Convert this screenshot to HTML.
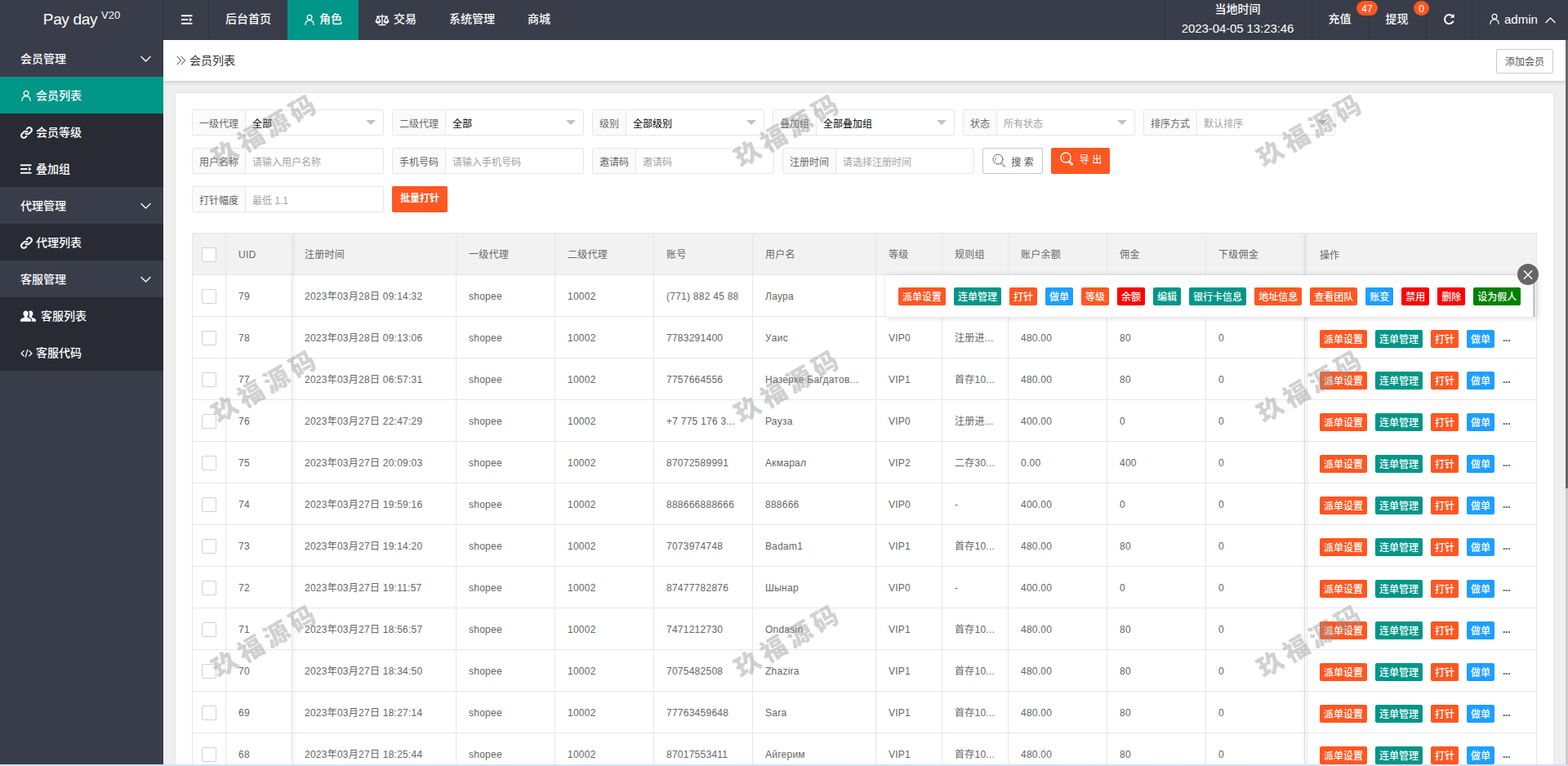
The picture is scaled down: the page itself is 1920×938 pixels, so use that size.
<!DOCTYPE html>
<html lang="zh-CN">
<head>
<meta charset="utf-8">
<title>Pay day</title>
<style>
*{box-sizing:border-box;margin:0;padding:0}
html,body{width:1920px;height:938px;overflow:hidden;background:#efefef}
body{position:relative;font-family:"Liberation Sans","Noto Sans CJK SC",sans-serif;font-size:12px;color:#666;line-height:1}
svg{display:block}
/* ---------- header ---------- */
#hd{position:absolute;left:0;top:0;width:1920px;height:49px;background:#393d49;color:#fff;font-size:14px;font-weight:500}
#hd .it{position:absolute;top:0;height:49px;line-height:47px;text-align:center;white-space:nowrap;color:#fff}
#hd .sep{position:absolute;top:0;width:1px;height:49px;background:rgba(0,0,0,.18)}
#logo{font-weight:normal;position:absolute;left:0;top:0;width:200px;height:49px;line-height:47px;text-align:center;font-size:19px;color:#fff;white-space:nowrap;letter-spacing:-.35px;padding-right:0}
#logo sup{font-size:13px;position:relative;top:-7px;vertical-align:baseline;margin-left:5px;letter-spacing:0}
.bdg{position:absolute;height:18px;line-height:20px;border-radius:9px;background:#ff5722;color:#fff;font-size:12px;text-align:center}
/* ---------- side ---------- */
#side{position:absolute;left:0;top:49px;width:200px;height:889px;background:#393d49;color:#fff;font-size:14px;font-weight:500}
#side .p,#side .c{position:relative;height:45px;line-height:47px;white-space:nowrap}
#side .p{padding-left:25px}
#side .c{padding-left:44px;background:#282b33}
#side .c.on{background:#009688}
#side .c svg{position:absolute;left:25px;top:16px}
#side .p svg{position:absolute;left:172px;top:19px}
/* ---------- title bar ---------- */
#tb{position:absolute;left:200px;top:49px;width:1717px;height:50px;background:#fff;box-shadow:0 1px 5px rgba(0,0,0,.2)}
#tb .tt{position:absolute;left:32px;top:0;line-height:51px;font-size:14px;color:#333}
#tb .add{position:absolute;left:1632px;top:11px;width:70px;height:30px;line-height:30px;border:1px solid #c9c9c9;border-radius:2px;text-align:center;font-size:12px;color:#555;background:#fff}
/* ---------- card ---------- */
#card{position:absolute;left:215px;top:114px;width:1687px;height:840px;background:#fff;box-shadow:0 0 3px rgba(0,0,0,.08)}
.g{position:absolute;height:32px;border:1px solid #e6e6e6;border-radius:2px;background:#fff;white-space:nowrap;overflow:hidden}
.g .l{position:absolute;left:0;top:0;height:30px;line-height:34px;padding:0 8px;background:#fbfbfb;border-right:1px solid #e6e6e6;color:#666;font-size:12px}
.g .v{position:absolute;top:0;height:30px;line-height:34px;font-size:12px;color:#000}
.g .v.ph{color:#a3a3a3}
.g .tri{position:absolute;right:9px;top:12px;width:0;height:0;border:6px solid transparent;border-top-color:#c2c2c2}
.btn{position:absolute;height:32px;line-height:32px;border-radius:2px;text-align:center;font-size:12px;white-space:nowrap}
/* ---------- table ---------- */
#tbl{position:absolute;left:235px;top:285px;width:1647px;height:660px;border:1px solid #e6e6e6;background:#fff;overflow:hidden}
.r{position:absolute;left:0;width:1645px;height:51px;border-bottom:1px solid #e6e6e6;background:#fff}
.r.h{background:#f2f2f2}
.r span{position:absolute;top:0;height:50px;line-height:52px;letter-spacing:.25px;padding-left:15px;border-right:1px solid #e6e6e6;white-space:nowrap;overflow:hidden;color:#666;font-size:12px}
.r i.cb{position:absolute;left:11px;top:17px;width:18px;height:18px;border:1px solid #d2d2d2;border-radius:2px;background:#fff}
.r .op{position:absolute;left:1364px;top:0;width:281px;height:50px;border-left:1px solid #e6e6e6;padding:16px 0 0 15px;white-space:nowrap;font-size:0;background:inherit}
.b{display:inline-block;font-weight:500;height:22px;line-height:25px;padding:0 5px;border-radius:2px;color:#fff;font-size:12px;vertical-align:top;margin-right:10px}
.o{background:#ff5722}.t{background:#009688}.u{background:#1e9fff}.rd{background:#ff0000}.gn{background:#008000}
.op em{font-style:normal;font-size:12px;color:#555;line-height:20px;display:inline-block;vertical-align:top;font-weight:bold;letter-spacing:-.3px}
/* ---------- tips ---------- */
#tip{position:absolute;left:1085px;top:337px;width:796px;height:51px;background:#fff;box-shadow:1px 1px 7px rgba(0,0,0,.16);padding:15px 0 0 15px;white-space:nowrap;font-size:0}
#tipsb{position:absolute;left:1877px;top:345px;width:3px;height:43px;background:#c8c8c8}
#tipc{position:absolute;left:1858px;top:323px;width:26px;height:26px;border-radius:50%;background:#666}
/* ---------- watermark ---------- */
.wm{position:absolute;width:200px;height:40px;line-height:40px;margin:-20px 0 0 -100px;text-align:center;font-size:31px;font-weight:900;color:rgba(150,150,150,.44);transform:rotate(-30deg);letter-spacing:5.5px;padding-left:11px;white-space:nowrap;pointer-events:none;font-family:"Liberation Sans","Noto Sans CJK SC",sans-serif}
/* ---------- scrollbar / bottom ---------- */
#sbt{position:absolute;left:1917px;top:49px;width:3px;height:889px;background:#ccc}
#sbh{position:absolute;left:1917px;top:49px;width:3px;height:549px;background:#666}
#bot{position:absolute;left:0;top:936px;width:1920px;height:2px;background:linear-gradient(90deg,#cde5ee 0,#cde5ee 40%,#d8dcec 100%)}
</style>
</head>
<body>
<div id="tb"><svg width="12" height="12" viewBox="0 0 12 12" fill="none" stroke="#777" stroke-width="1.100" stroke-linecap="round" stroke-linejoin="round" style="position:absolute;left:16px;top:19px"><path d="M1 1.200l4.600 4.800L1 10.800M6 1.200l4.600 4.800L6 10.800"/></svg><div class="tt">会员列表</div><div class="add">添加会员</div></div>
<div id="card"></div>
<div class="g" style="left:235px;top:134px;width:235px"><div class="l" style="width:65px">一级代理</div><div class="v" style="left:73px">全部</div><i class="tri"></i></div>
<div class="g" style="left:480px;top:134px;width:235px"><div class="l" style="width:65px">二级代理</div><div class="v" style="left:73px">全部</div><i class="tri"></i></div>
<div class="g" style="left:725px;top:134px;width:211px"><div class="l" style="width:41px">级别</div><div class="v" style="left:49px">全部级别</div><i class="tri"></i></div>
<div class="g" style="left:946px;top:134px;width:223px"><div class="l" style="width:53px">叠加组</div><div class="v" style="left:61px">全部叠加组</div><i class="tri"></i></div>
<div class="g" style="left:1179px;top:134px;width:211px"><div class="l" style="width:41px">状态</div><div class="v ph" style="left:49px">所有状态</div><i class="tri"></i></div>
<div class="g" style="left:1400px;top:134px;width:235px"><div class="l" style="width:65px">排序方式</div><div class="v ph" style="left:73px">默认排序</div><i class="tri"></i></div>
<div class="g" style="left:235px;top:181px;width:235px"><div class="l" style="width:65px">用户名称</div><div class="v ph" style="left:73px">请输入用户名称</div></div>
<div class="g" style="left:480px;top:181px;width:235px"><div class="l" style="width:65px">手机号码</div><div class="v ph" style="left:73px">请输入手机号码</div></div>
<div class="g" style="left:725px;top:181px;width:223px"><div class="l" style="width:53px">邀请码</div><div class="v ph" style="left:61px">邀请码</div></div>
<div class="g" style="left:958px;top:181px;width:235px"><div class="l" style="width:65px">注册时间</div><div class="v ph" style="left:73px">请选择注册时间</div></div>
<div class="g" style="left:235px;top:228px;width:235px"><div class="l" style="width:65px">打针幅度</div><div class="v ph" style="left:73px">最低 1.1</div></div>
<div class="btn" style="left:1203px;top:181px;width:74px;border:1px solid #c9c9c9;background:#fff;color:#555;line-height:34px;padding-left:24px"><svg width="17" height="17" viewBox="0 0 17 17" fill="none" stroke="#666" stroke-width="1.0" stroke-linecap="round" style="position:absolute;left:11px;top:6px"><circle cx="7" cy="7" r="6"/><path d="M11.800 11.200l3.300 3.300a0.900 0.900 0 0 1-1.300 1.300l-3.300-3.300" stroke-width="0.85"/><path d="M4.300 8.400a3.200 3.200 0 0 1 0.300-3.300" stroke-width="0.800"/></svg>搜 索</div>
<div class="btn" style="left:1287px;top:181px;width:72px;background:#ff5722;color:#fff;line-height:31px;padding-left:25px;height:32px"><svg width="17" height="17" viewBox="0 0 17 17" fill="none" stroke="#fff" stroke-width="1.4" stroke-linecap="round" style="position:absolute;left:11px;top:5px"><circle cx="7" cy="7" r="6"/><path d="M11.800 11.200l3.300 3.300a0.900 0.900 0 0 1-1.300 1.300l-3.300-3.300" stroke-width="1.19"/><path d="M4.300 8.400a3.200 3.200 0 0 1 0.300-3.300" stroke-width="0.800"/></svg>导 出</div>
<div class="btn" style="left:480px;top:228px;width:68px;background:#ff5722;color:#fff;font-weight:bold;line-height:30px">批量打针</div>
<div id="tbl">
<div class="r h" style="top:0px"><span style="left:0;width:41px;padding:0"><i class="cb"></i></span><span style="left:41px;width:81px">UID</span><span style="left:122px;width:201px">注册时间</span><span style="left:323px;width:121px">一级代理</span><span style="left:444px;width:121px">二级代理</span><span style="left:565px;width:121px">账号</span><span style="left:686px;width:151px">用户名</span><span style="left:837px;width:81px">等级</span><span style="left:918px;width:81px">规则组</span><span style="left:999px;width:121px">账户余额</span><span style="left:1120px;width:121px">佣金</span><span style="left:1241px;width:121px">下级佣金</span><div class="op"><em style="line-height:22px;font-weight:normal;color:#666;letter-spacing:0">操作</em></div></div>
<div class="r" style="top:51px"><span style="left:0;width:41px;padding:0"><i class="cb"></i></span><span style="left:41px;width:81px">79</span><span style="left:122px;width:201px">2023年03月28日 09:14:32</span><span style="left:323px;width:121px">shopee</span><span style="left:444px;width:121px">10002</span><span style="left:565px;width:121px">(771) 882 45 88</span><span style="left:686px;width:151px">Лаура</span><span style="left:837px;width:81px">VIP0</span><span style="left:918px;width:81px">注册进...</span><span style="left:999px;width:121px">480.00</span><span style="left:1120px;width:121px">80</span><span style="left:1241px;width:121px">0</span><div class="op"></div></div>
<div class="r" style="top:102px"><span style="left:0;width:41px;padding:0"><i class="cb"></i></span><span style="left:41px;width:81px">78</span><span style="left:122px;width:201px">2023年03月28日 09:13:06</span><span style="left:323px;width:121px">shopee</span><span style="left:444px;width:121px">10002</span><span style="left:565px;width:121px">7783291400</span><span style="left:686px;width:151px">Уаис</span><span style="left:837px;width:81px">VIP0</span><span style="left:918px;width:81px">注册进...</span><span style="left:999px;width:121px">480.00</span><span style="left:1120px;width:121px">80</span><span style="left:1241px;width:121px">0</span><div class="op"><b class="b o">派单设置</b><b class="b t">连单管理</b><b class="b o">打针</b><b class="b u">做单</b><em>...</em></div></div>
<div class="r" style="top:153px"><span style="left:0;width:41px;padding:0"><i class="cb"></i></span><span style="left:41px;width:81px">77</span><span style="left:122px;width:201px">2023年03月28日 06:57:31</span><span style="left:323px;width:121px">shopee</span><span style="left:444px;width:121px">10002</span><span style="left:565px;width:121px">7757664556</span><span style="left:686px;width:151px">Назерке Багдатов...</span><span style="left:837px;width:81px">VIP1</span><span style="left:918px;width:81px">首存10...</span><span style="left:999px;width:121px">480.00</span><span style="left:1120px;width:121px">80</span><span style="left:1241px;width:121px">0</span><div class="op"><b class="b o">派单设置</b><b class="b t">连单管理</b><b class="b o">打针</b><b class="b u">做单</b><em>...</em></div></div>
<div class="r" style="top:204px"><span style="left:0;width:41px;padding:0"><i class="cb"></i></span><span style="left:41px;width:81px">76</span><span style="left:122px;width:201px">2023年03月27日 22:47:29</span><span style="left:323px;width:121px">shopee</span><span style="left:444px;width:121px">10002</span><span style="left:565px;width:121px">+7 775 176 3...</span><span style="left:686px;width:151px">Рауза</span><span style="left:837px;width:81px">VIP0</span><span style="left:918px;width:81px">注册进...</span><span style="left:999px;width:121px">400.00</span><span style="left:1120px;width:121px">0</span><span style="left:1241px;width:121px">0</span><div class="op"><b class="b o">派单设置</b><b class="b t">连单管理</b><b class="b o">打针</b><b class="b u">做单</b><em>...</em></div></div>
<div class="r" style="top:255px"><span style="left:0;width:41px;padding:0"><i class="cb"></i></span><span style="left:41px;width:81px">75</span><span style="left:122px;width:201px">2023年03月27日 20:09:03</span><span style="left:323px;width:121px">shopee</span><span style="left:444px;width:121px">10002</span><span style="left:565px;width:121px">87072589991</span><span style="left:686px;width:151px">Акмарал</span><span style="left:837px;width:81px">VIP2</span><span style="left:918px;width:81px">二存30...</span><span style="left:999px;width:121px">0.00</span><span style="left:1120px;width:121px">400</span><span style="left:1241px;width:121px">0</span><div class="op"><b class="b o">派单设置</b><b class="b t">连单管理</b><b class="b o">打针</b><b class="b u">做单</b><em>...</em></div></div>
<div class="r" style="top:306px"><span style="left:0;width:41px;padding:0"><i class="cb"></i></span><span style="left:41px;width:81px">74</span><span style="left:122px;width:201px">2023年03月27日 19:59:16</span><span style="left:323px;width:121px">shopee</span><span style="left:444px;width:121px">10002</span><span style="left:565px;width:121px">888666888666</span><span style="left:686px;width:151px">888666</span><span style="left:837px;width:81px">VIP0</span><span style="left:918px;width:81px">-</span><span style="left:999px;width:121px">400.00</span><span style="left:1120px;width:121px">0</span><span style="left:1241px;width:121px">0</span><div class="op"><b class="b o">派单设置</b><b class="b t">连单管理</b><b class="b o">打针</b><b class="b u">做单</b><em>...</em></div></div>
<div class="r" style="top:357px"><span style="left:0;width:41px;padding:0"><i class="cb"></i></span><span style="left:41px;width:81px">73</span><span style="left:122px;width:201px">2023年03月27日 19:14:20</span><span style="left:323px;width:121px">shopee</span><span style="left:444px;width:121px">10002</span><span style="left:565px;width:121px">7073974748</span><span style="left:686px;width:151px">Badam1</span><span style="left:837px;width:81px">VIP1</span><span style="left:918px;width:81px">首存10...</span><span style="left:999px;width:121px">480.00</span><span style="left:1120px;width:121px">80</span><span style="left:1241px;width:121px">0</span><div class="op"><b class="b o">派单设置</b><b class="b t">连单管理</b><b class="b o">打针</b><b class="b u">做单</b><em>...</em></div></div>
<div class="r" style="top:408px"><span style="left:0;width:41px;padding:0"><i class="cb"></i></span><span style="left:41px;width:81px">72</span><span style="left:122px;width:201px">2023年03月27日 19:11:57</span><span style="left:323px;width:121px">shopee</span><span style="left:444px;width:121px">10002</span><span style="left:565px;width:121px">87477782876</span><span style="left:686px;width:151px">Шынар</span><span style="left:837px;width:81px">VIP0</span><span style="left:918px;width:81px">-</span><span style="left:999px;width:121px">400.00</span><span style="left:1120px;width:121px">0</span><span style="left:1241px;width:121px">0</span><div class="op"><b class="b o">派单设置</b><b class="b t">连单管理</b><b class="b o">打针</b><b class="b u">做单</b><em>...</em></div></div>
<div class="r" style="top:459px"><span style="left:0;width:41px;padding:0"><i class="cb"></i></span><span style="left:41px;width:81px">71</span><span style="left:122px;width:201px">2023年03月27日 18:56:57</span><span style="left:323px;width:121px">shopee</span><span style="left:444px;width:121px">10002</span><span style="left:565px;width:121px">7471212730</span><span style="left:686px;width:151px">Ondasin</span><span style="left:837px;width:81px">VIP1</span><span style="left:918px;width:81px">首存10...</span><span style="left:999px;width:121px">480.00</span><span style="left:1120px;width:121px">80</span><span style="left:1241px;width:121px">0</span><div class="op"><b class="b o">派单设置</b><b class="b t">连单管理</b><b class="b o">打针</b><b class="b u">做单</b><em>...</em></div></div>
<div class="r" style="top:510px"><span style="left:0;width:41px;padding:0"><i class="cb"></i></span><span style="left:41px;width:81px">70</span><span style="left:122px;width:201px">2023年03月27日 18:34:50</span><span style="left:323px;width:121px">shopee</span><span style="left:444px;width:121px">10002</span><span style="left:565px;width:121px">7075482508</span><span style="left:686px;width:151px">Zhazira</span><span style="left:837px;width:81px">VIP1</span><span style="left:918px;width:81px">首存10...</span><span style="left:999px;width:121px">480.00</span><span style="left:1120px;width:121px">80</span><span style="left:1241px;width:121px">0</span><div class="op"><b class="b o">派单设置</b><b class="b t">连单管理</b><b class="b o">打针</b><b class="b u">做单</b><em>...</em></div></div>
<div class="r" style="top:561px"><span style="left:0;width:41px;padding:0"><i class="cb"></i></span><span style="left:41px;width:81px">69</span><span style="left:122px;width:201px">2023年03月27日 18:27:14</span><span style="left:323px;width:121px">shopee</span><span style="left:444px;width:121px">10002</span><span style="left:565px;width:121px">77763459648</span><span style="left:686px;width:151px">Sara</span><span style="left:837px;width:81px">VIP1</span><span style="left:918px;width:81px">首存10...</span><span style="left:999px;width:121px">480.00</span><span style="left:1120px;width:121px">80</span><span style="left:1241px;width:121px">0</span><div class="op"><b class="b o">派单设置</b><b class="b t">连单管理</b><b class="b o">打针</b><b class="b u">做单</b><em>...</em></div></div>
<div class="r" style="top:612px"><span style="left:0;width:41px;padding:0"><i class="cb"></i></span><span style="left:41px;width:81px">68</span><span style="left:122px;width:201px">2023年03月27日 18:25:44</span><span style="left:323px;width:121px">shopee</span><span style="left:444px;width:121px">10002</span><span style="left:565px;width:121px">87017553411</span><span style="left:686px;width:151px">Айгерим</span><span style="left:837px;width:81px">VIP1</span><span style="left:918px;width:81px">首存10...</span><span style="left:999px;width:121px">480.00</span><span style="left:1120px;width:121px">80</span><span style="left:1241px;width:121px">0</span><div class="op"><b class="b o">派单设置</b><b class="b t">连单管理</b><b class="b o">打针</b><b class="b u">做单</b><em>...</em></div></div>
<div style="position:absolute;left:122px;top:0;width:6px;height:700px;background:linear-gradient(90deg,rgba(0,0,0,.045),rgba(0,0,0,0))"></div>
<div style="position:absolute;left:1357px;top:0;width:6px;height:700px;background:linear-gradient(270deg,rgba(0,0,0,.045),rgba(0,0,0,0))"></div>
</div>
<div id="side">
<div class="p">会员管理<svg width="13" height="9" viewBox="0 0 13 9" fill="none" stroke="#fff" stroke-width="1.400" stroke-linecap="round" stroke-linejoin="round"><path d="M1 1.500l5.500 5.500L12 1.500"/></svg></div>
<div class="c on"><svg width="14" height="14" viewBox="0 0 16 16" fill="none" stroke="#fff" stroke-width="1.4" stroke-linecap="round" style=""><circle cx="8" cy="4.9" r="3.3"/><path d="M2.2 15.2c0-4 2.3-6.2 5.8-6.2s5.8 2.200 5.800 6.200"/></svg>会员列表</div>
<div class="c"><svg width="15" height="15" viewBox="0 0 16 16" fill="none" stroke="#fff" stroke-width="2.1" stroke-linecap="round"><path d="M6.900 9.100a3.100 3.100 0 0 0 4.400 0l2.500-2.500a3.100 3.100 0 0 0-4.400-4.400l-1.100 1.100"/><path d="M9.100 6.900a3.100 3.100 0 0 0-4.400 0l-2.500 2.500a3.100 3.100 0 0 0 4.400 4.400l1.100-1.100"/></svg>会员等级</div>
<div class="c"><svg width="14" height="14" viewBox="0 0 14 14" fill="#fff"><rect x="0" y="1.300" width="13.500" height="1.900"/><rect x="0" y="6.050" width="8.500" height="1.900"/><rect x="0" y="10.800" width="13.500" height="1.900"/><path d="M10 4.500l3.500 2.500l-3.500 2.500z"/></svg>叠加组</div>
<div class="p">代理管理<svg width="13" height="9" viewBox="0 0 13 9" fill="none" stroke="#fff" stroke-width="1.400" stroke-linecap="round" stroke-linejoin="round"><path d="M1 1.500l5.500 5.500L12 1.500"/></svg></div>
<div class="c"><svg width="15" height="15" viewBox="0 0 16 16" fill="none" stroke="#fff" stroke-width="2.1" stroke-linecap="round"><path d="M6.900 9.100a3.100 3.100 0 0 0 4.400 0l2.500-2.500a3.100 3.100 0 0 0-4.400-4.400l-1.100 1.100"/><path d="M9.100 6.900a3.100 3.100 0 0 0-4.400 0l-2.500 2.500a3.100 3.100 0 0 0 4.400 4.400l1.100-1.100"/></svg>代理列表</div>
<div class="p">客服管理<svg width="13" height="9" viewBox="0 0 13 9" fill="none" stroke="#fff" stroke-width="1.400" stroke-linecap="round" stroke-linejoin="round"><path d="M1 1.500l5.500 5.500L12 1.500"/></svg></div>
<div class="c" style="padding-left:50px"><svg width="19" height="15" viewBox="0 0 19 15" fill="#fff"><path d="M6.600 0.600c1.900 0 3.100 1.500 3.100 3.500 0 1.400-0.600 2.700-1.500 3.400v0.900l3.900 1.800c0.700 0.300 1.100 0.900 1.100 1.600v2H0v-2c0-0.700 0.400-1.300 1.100-1.600l3.900-1.800v-0.900c-0.900-0.700-1.500-2-1.500-3.400 0-2 1.200-3.500 3.100-3.500z"/><path d="M12.300 0.600c1.900 0 3.100 1.500 3.100 3.500 0 1.400-0.600 2.700-1.500 3.400v0.900l3.900 1.800c0.700 0.300 1.100 0.900 1.100 1.600v2h-4.700v-2c0-1.200-0.600-2.100-1.700-2.600l-2.300-1.100c0.700-0.900 1-2 1-3.300 0-1.300-0.300-2.500-1-3.400 0.500-0.500 1.200-0.800 2.100-0.800z"/></svg>客服列表</div>
<div class="c"><svg width="15" height="15" viewBox="0 0 15 15" fill="none" stroke="#fff" stroke-width="1.300" stroke-linecap="round" stroke-linejoin="round"><path d="M4.200 4.600L1 7.700l3.200 3.100M10.800 4.600L14 7.700l-3.200 3.100M8.700 3.300L6.300 12.100"/></svg>客服代码</div>
</div>
<div id="hd">
<div id="logo">Pay day<sup>V20</sup></div>
<div class="sep" style="left:199px"></div>
<div class="sep" style="left:255px"></div>
<div class="sep" style="left:1426px"></div>
<div class="sep" style="left:1606px"></div>
<div class="sep" style="left:1676px"></div>
<div class="sep" style="left:1746px"></div>
<div class="sep" style="left:1802px"></div>
<div class="it" style="left:200px;width:56px"><span style="position:absolute;left:22px;top:17px"><svg width="14" height="14" viewBox="0 0 14 14" fill="#fff"><rect x="0" y="1.300" width="13.500" height="1.900"/><rect x="0" y="6.050" width="8.500" height="1.900"/><rect x="0" y="10.800" width="13.500" height="1.900"/><path d="M10 4.500l3.500 2.500l-3.500 2.500z"/></svg></span></div>
<div class="it" style="left:256px;width:96px">后台首页</div>
<div class="it" style="left:352px;width:87px;background:#009688"><span style="position:absolute;left:20px;top:17px"><svg width="14" height="14" viewBox="0 0 16 16" fill="none" stroke="#fff" stroke-width="1.4" stroke-linecap="round" style=""><circle cx="8" cy="4.9" r="3.3"/><path d="M2.2 15.2c0-4 2.3-6.2 5.8-6.2s5.8 2.200 5.800 6.200"/></svg></span><span style="position:absolute;left:39px;top:0">角色</span></div>
<div class="it" style="left:439px;width:91px"><span style="position:absolute;left:20px;top:17px"><svg width="18" height="15" viewBox="0 0 18 15" fill="none" stroke="#fff" stroke-width="1.300" stroke-linejoin="round" stroke-linecap="round"><path d="M9 1.200v12M5 13.500h8M2.500 3.200h13M4 3.400L1.200 9.300h5.600zM14 3.400l-2.800 5.900h5.600z"/><path d="M1.200 9.300a2.800 2.200 0 0 0 5.600 0M11.200 9.300a2.800 2.200 0 0 0 5.600 0" fill="#fff" stroke-width="0.800"/></svg></span><span style="position:absolute;left:43px;top:0">交易</span></div>
<div class="it" style="left:530px;width:96px">系统管理</div>
<div class="it" style="left:626px;width:68px">商城</div>
<div class="it" style="left:1426px;width:179px;line-height:1"><div style="position:absolute;left:0;width:179px;top:4px;font-size:14px">当地时间</div><div style="position:absolute;left:0;width:179px;top:27px;font-size:15px;letter-spacing:-.1px">2023-04-05 13:23:46</div></div>
<div class="it" style="left:1606px;width:69px">充值</div>
<div class="it" style="left:1676px;width:69px">提现</div>
<div class="bdg" style="left:1661px;top:1px;width:26px">47</div>
<div class="bdg" style="left:1731px;top:1px;width:19px">0</div>
<div class="it" style="left:1747px;width:55px"><span style="position:absolute;left:20px;top:16px"><svg width="15" height="15" viewBox="0 0 15 15" fill="none" stroke="#fff" stroke-width="2" stroke-linecap="butt"><path d="M12.600 9.700a5.500 5.500 0 1 1-1.300-6.100"/><path d="M13.600 0.800v5h-5z" fill="#fff" stroke="none"/></svg></span></div>
<div class="it" style="left:1803px;width:114px"><span style="position:absolute;left:20px;top:16px"><svg width="14" height="14" viewBox="0 0 16 16" fill="none" stroke="#fff" stroke-width="1.4" stroke-linecap="round" style=""><circle cx="8" cy="4.9" r="3.3"/><path d="M2.2 15.2c0-4 2.3-6.2 5.8-6.2s5.8 2.200 5.800 6.200"/></svg></span><span style="position:absolute;left:39px;top:0;font-size:15px">admin</span><span style="position:absolute;left:89px;top:19.500px"><svg width="13" height="9" viewBox="0 0 13 9" fill="none" stroke="#fff" stroke-width="1.400" stroke-linecap="round" stroke-linejoin="round"><path d="M1 7.500l5.500-5.500L12 7.500"/></svg></span></div>
</div>
<div id="tip"><b class="b o">派单设置</b><b class="b t">连单管理</b><b class="b o">打针</b><b class="b u">做单</b><b class="b o">等级</b><b class="b rd">余额</b><b class="b t">编辑</b><b class="b t">银行卡信息</b><b class="b o">地址信息</b><b class="b o">查看团队</b><b class="b u">账变</b><b class="b rd">禁用</b><b class="b rd">删除</b><b class="b gn">设为假人</b></div><div id="tipsb"></div><div id="tipc"><svg width="26" height="26" viewBox="0 0 26 26" fill="none" stroke="#fff" stroke-width="1.500" stroke-linecap="round"><path d="M8.300 8.800l9.400 9.400M17.700 8.800l-9.400 9.400"/></svg></div>
<div class="wm" style="left:321px;top:163px">玖福源码</div>
<div class="wm" style="left:961px;top:163px">玖福源码</div>
<div class="wm" style="left:1601px;top:163px">玖福源码</div>
<div class="wm" style="left:321px;top:476px">玖福源码</div>
<div class="wm" style="left:961px;top:476px">玖福源码</div>
<div class="wm" style="left:1601px;top:476px">玖福源码</div>
<div class="wm" style="left:321px;top:788px">玖福源码</div>
<div class="wm" style="left:961px;top:788px">玖福源码</div>
<div class="wm" style="left:1601px;top:788px">玖福源码</div>
<div id="sbt"></div><div id="sbh"></div>
<div id="bot"></div>
</body>
</html>
